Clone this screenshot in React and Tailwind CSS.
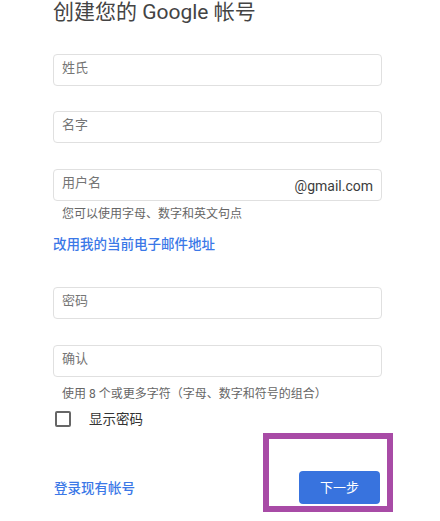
import React from "react";

const font = { fontFamily: 'Roboto, "Noto Sans CJK SC", sans-serif' };

function Field({ label, suffix, className = "" }) {
  return (
    <div
      className={`h-[32px] w-[329px] rounded-[4px] border border-[#e0e0e0] flex items-start justify-between pl-[8px] pr-[8px] ${className}`}
    >
      <span className="pt-[5px] text-[13px] leading-[16px] text-[#757575]">{label}</span>
      {suffix && (
        <span className="self-center text-[14px] leading-[16px] text-[#3c3c3c] pt-[2px]">{suffix}</span>
      )}
    </div>
  );
}

export default function App() {
  return (
    <div className="relative w-[440px] h-[521px] overflow-hidden bg-white" style={font}>
      <div className="ml-[53px] w-[329px] flex flex-col">
        <h1 className="text-[21px] leading-[24px] text-[#444] font-normal whitespace-nowrap">
          创建您的 Google 帐号
        </h1>
        <Field label="姓氏" className="mt-[30px]" />
        <Field label="名字" className="mt-[25px]" />
        <Field label="用户名" suffix="@gmail.com" className="mt-[26px]" />
        <p className="mt-[5px] pl-[9px] text-[12px] leading-[16px] text-[#666]">
          您可以使用字母、数字和英文句点
        </p>
        <a className="mt-[13px] text-[13.5px] leading-[18px] text-[#3b78e7] font-medium">
          改用我的当前电子邮件地址
        </a>
        <Field label="密码" className="mt-[34px]" />
        <Field label="确认" className="mt-[26px]" />
        <p className="mt-[9px] pl-[9px] text-[12px] leading-[16px] text-[#666] whitespace-nowrap">
          使用 8 个或更多字符（字母、数字和符号的组合）
        </p>
        <div className="mt-[9px] flex items-center h-[16px] pl-[2px]">
          <span className="w-[16px] h-[16px] rounded-[2px] border-2 border-[#666]" />
          <span className="ml-[18px] text-[13.5px] leading-[16px] text-[#333]">显示密码</span>
        </div>
        <div className="mt-[44px] flex items-center justify-between pr-[2px]">
          <a className="ml-[1px] text-[13.5px] leading-[18px] text-[#3b78e7] font-medium">登录现有帐号</a>
          <button className="w-[81px] h-[33px] rounded-[4px] bg-[#3873de] text-white text-[13px]">
            下一步
          </button>
        </div>
      </div>
      <div className="absolute left-[263px] top-[433px] w-[130px] h-[79px] border-[6px] border-[#a84ba6] pointer-events-none" />
    </div>
  );
}
